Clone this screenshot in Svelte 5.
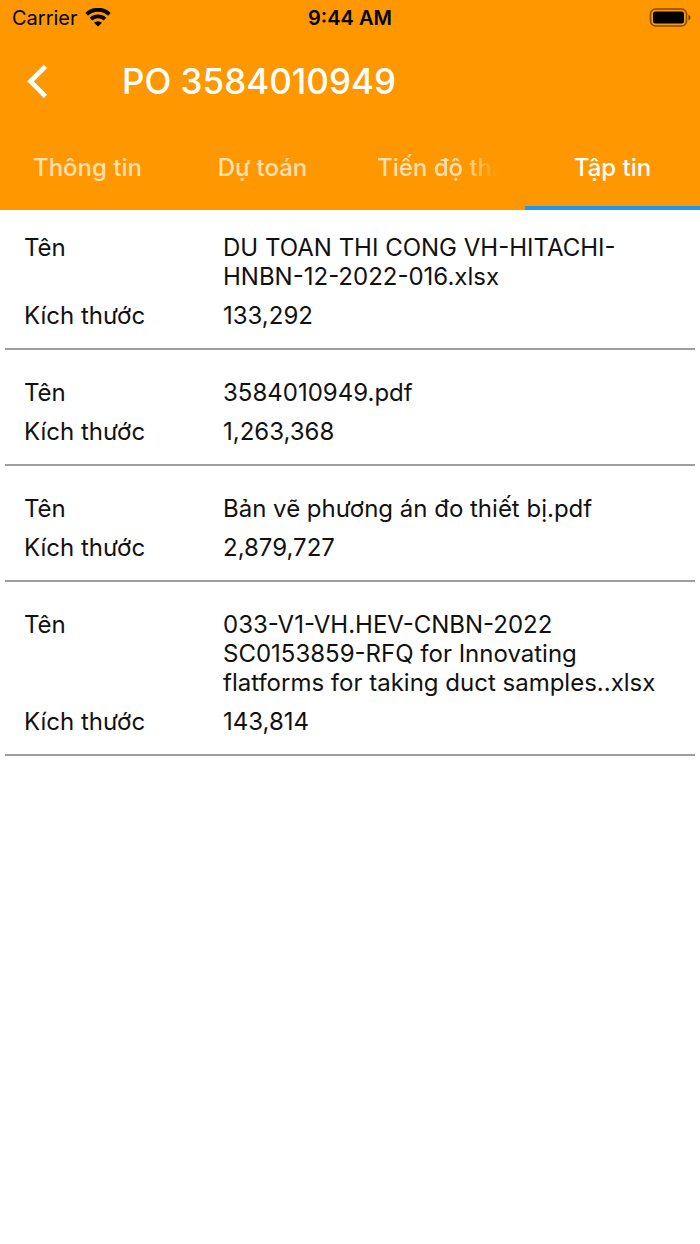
<script>
  const tabs = ['Thông tin', 'Dự toán', 'Tiến độ tha', 'Tập tin'];
  let active = $state(3);
  const files = [
    { name: 'DU TOAN THI CONG VH-HITACHI-HNBN-12-2022-016.xlsx', size: '133,292' },
    { name: '3584010949.pdf', size: '1,263,368' },
    { name: 'Bản vẽ phương án đo thiết bị.pdf', size: '2,879,727' },
    { name: '033-V1-VH.HEV-CNBN-2022 SC0153859-RFQ for Innovating flatforms for taking duct samples..xlsx', size: '143,814' }
  ];
</script>

<div class="screen">
  <header>
    <div class="status">
      <div class="carrier">
        <span>Carrier</span>
        <svg width="26" height="20" viewBox="0 0 26 20" aria-hidden="true">
          <g fill="none" stroke="#000" stroke-width="3.800">
            <path d="M1.600 6.300a16.500 16.500 0 0 1 22.800 0" />
            <path d="M6 11.100a10.200 10.200 0 0 1 14 0" />
          </g>
          <path d="M9 14.800a6 6 0 0 1 8 0L13 18.600z" />
        </svg>
      </div>
      <time>9:44 AM</time>
      <svg class="battery" width="42" height="20" viewBox="0 0 42 20" aria-hidden="true">
        <rect x="1.500" y="1" width="36" height="17" rx="5" fill="none" stroke="#000" stroke-opacity=".5" stroke-width="1.600" />
        <rect x="4" y="3.500" width="31" height="12" rx="2.500" />
        <path d="M39.500 6.500c2.500 1 2.500 5 0 6z" opacity=".6" />
      </svg>
    </div>
    <div class="bar">
      <button class="back" aria-label="Back">
        <svg width="22" height="34" viewBox="0 0 22 34" aria-hidden="true">
          <path d="M19.500 2.300 4.500 17.300l15 15" fill="none" stroke="#fff" stroke-width="4.600" />
        </svg>
      </button>
      <h1>PO 3584010949</h1>
    </div>
    <nav>
      {#each tabs as tab, i}
        <button class="tab" class:fade={i === 2} class:active={active === i} onclick={() => (active = i)}><span>{tab}</span></button>
      {/each}
    </nav>
  </header>
  <main>
    {#each files as file}
      <dl>
        <dt>Tên</dt>
        <dd>{file.name}</dd>
        <dt>Kích thước</dt>
        <dd>{file.size}</dd>
      </dl>
    {/each}
  </main>
</div>

<style>
  :global(body) { background: #fff; }
  .screen { font-family: Inter, "Liberation Sans", sans-serif; color: #111; }
  header { background: #ff9800; }
  .status { display: grid; grid-template-columns: 1fr auto 1fr; align-items: center; height: 36px; padding: 0 9px; color: #000; font-size: 20px; }
  .carrier { display: flex; align-items: center; gap: 7px; padding-left: 3px; }
  .carrier svg { display: block; }
  time { font-weight: 600; }
  .battery { justify-self: end; }
  .bar { display: flex; align-items: center; height: 90px; padding-left: 26px; gap: 74px; }
  button { border: 0; padding: 0; background: none; font: inherit; cursor: pointer; }
  .back { display: flex; }
  h1 { margin: 0; color: #fff; font-size: 35px; font-weight: 500; line-height: 40px; }
  nav { display: grid; grid-template-columns: repeat(4, minmax(0, 1fr)); height: 84px; }
  .tab { display: flex; align-items: center; justify-content: center; min-width: 0; padding: 3px 27px 0; border-bottom: 4px solid transparent; color: #ffe0b2; font-size: 24px; font-weight: 500; }
  .tab span { overflow: hidden; white-space: nowrap; }
  .fade span { mask-image: linear-gradient(to left, transparent, #000 36px); }
  .active { color: #fff; border-bottom-color: #2196f3; }
  dl { display: grid; grid-template-columns: 199px minmax(0, 1fr); row-gap: 10px; margin: 0 5px; padding: 28px 19px 18px; border-bottom: 2px solid #9e9e9e; font-size: 24px; line-height: 29px; }
  dl:first-child { padding-top: 23px; }
  dd { margin: 0; }
</style>
